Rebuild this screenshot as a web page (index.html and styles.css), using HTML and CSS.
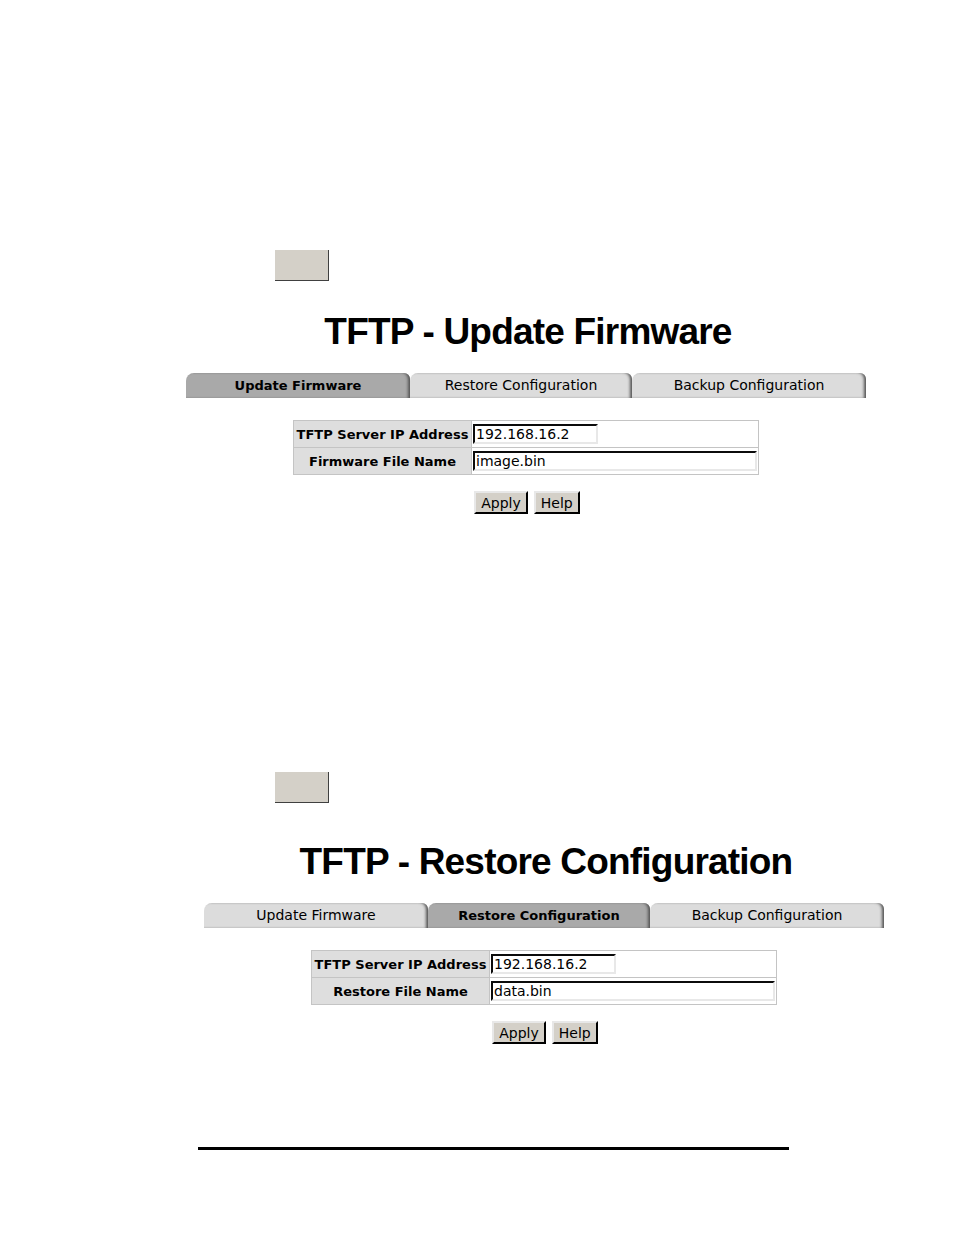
FILE: index.html
```html
<!DOCTYPE html>
<html lang="en">
<head>
  <meta charset="UTF-8">
  <title>TFTP</title>
  <link rel="stylesheet" href="styles.css">
</head>
<body>
  <div class="page">

    <div class="section">
      <div class="blank-btn"></div>
      <div class="screen first">
        <h1>TFTP - Update Firmware</h1>
        <div class="tabs">
          <div class="tab active">Update Firmware</div>
          <div class="tab">Restore Configuration</div>
          <div class="tab">Backup Configuration</div>
        </div>
        <table class="form">
          <tr>
            <th>TFTP Server IP Address</th>
            <td><input class="short" type="text" value="192.168.16.2"></td>
          </tr>
          <tr>
            <th>Firmware File Name</th>
            <td><input class="long" type="text" value="image.bin"></td>
          </tr>
        </table>
        <div class="actions">
          <button>Apply</button>
          <button>Help</button>
        </div>
      </div>
    </div>

    <div class="section second">
      <div class="blank-btn"></div>
      <div class="screen">
        <h1>TFTP - Restore Configuration</h1>
        <div class="tabs">
          <div class="tab">Update Firmware</div>
          <div class="tab active">Restore Configuration</div>
          <div class="tab">Backup Configuration</div>
        </div>
        <table class="form">
          <tr>
            <th>TFTP Server IP Address</th>
            <td><input class="short" type="text" value="192.168.16.2"></td>
          </tr>
          <tr>
            <th>Restore File Name</th>
            <td><input class="long" type="text" value="data.bin"></td>
          </tr>
        </table>
        <div class="actions">
          <button>Apply</button>
          <button>Help</button>
        </div>
      </div>
    </div>

    <div class="rule"></div>
  </div>
</body>
</html>
```

FILE: styles.css
```css
body { margin: 0; background: #fff; font-family: "DejaVu Sans", Verdana, sans-serif; color: #000; }
.page { width: 954px; padding-top: 250px; }

.section + .section { margin-top: 258px; }
.blank-btn { margin-left: 275px; width: 53px; height: 30px; background: #d4d0c8; border-right: 1px solid #404040; border-bottom: 1px solid #404040; }

.screen { margin-left: 186px; width: 680px; margin-top: 29px; }
.second .screen { margin-left: 204px; margin-top: 37px; }

h1 { margin: 0; padding-left: 4px; font-family: "Liberation Sans", Arial, sans-serif; font-weight: bold; font-size: 37px; line-height: 44px; text-align: center; letter-spacing: -0.8px; }

.tabs { display: flex; margin-top: 19px; height: 25px; }
.tab { background: #dcdcdc; font-size: 14px; line-height: 25px; text-align: center; border-top-left-radius: 8px; border-top-right-radius: 6px; box-shadow: inset -3px 0 3px -1px #555; }
.tab:nth-child(1) { width: 224px; }
.tab:nth-child(2) { width: 222px; }
.tab:nth-child(3) { width: 234px; }
.tab.active { background: #a9a9a9; font-weight: bold; font-size: 13px; }

.form { margin: 22px auto 0; border-collapse: collapse; border: 1px solid #b8b8b8; width: 466px; }
.form th, .form td { border: 1px solid #c4c4c4; padding: 2px 1px; height: 22px; }
.form th { background: #dedede; font-size: 13px; font-weight: bold; white-space: nowrap; width: 174px; padding: 2px 2px; }
.form td { background: #fff; }
input { font-family: "DejaVu Sans", Verdana, sans-serif; font-size: 14px; height: 20px; box-sizing: border-box; padding: 0 1px; margin: 0; border: 2px inset #d4d0c8; border-top-color: #606060; border-left-color: #606060; border-right-color: #e8e8e8; border-bottom-color: #e8e8e8; }
input.short { width: 125px; }
input.long { width: 284px; }

.actions { margin-top: 16px; padding-left: 2px; display: flex; justify-content: center; gap: 6px; }
button { font-family: "DejaVu Sans", Verdana, sans-serif; font-size: 14px; height: 23px; padding: 0 5px; background: #d4d0c8; border: 2px outset #e8e8e8; border-right-color: #404040; border-bottom-color: #404040; color: #000; }

.rule { margin: 103px 0 0 198px; width: 591px; height: 3px; background: #000; }
```
